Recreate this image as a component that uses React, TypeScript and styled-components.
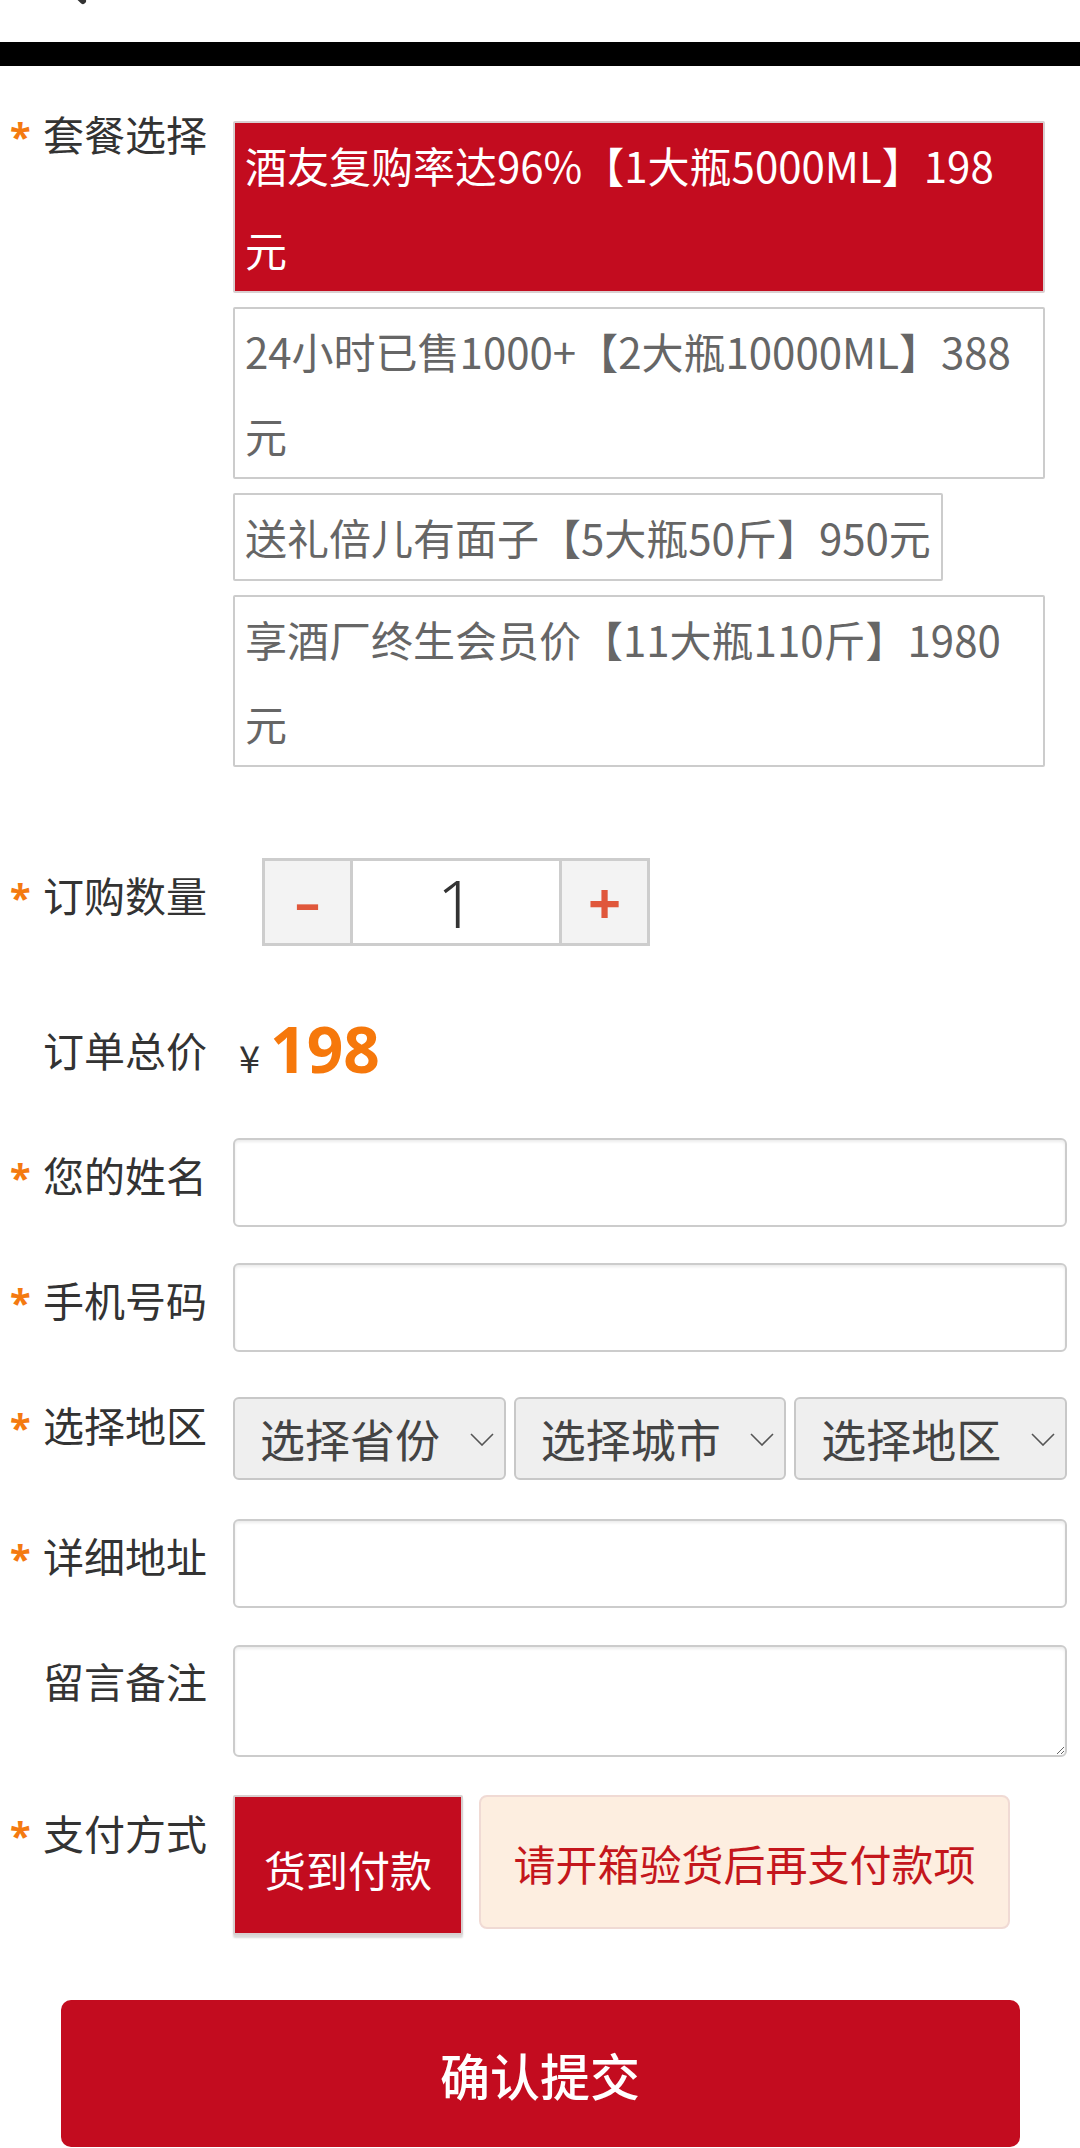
import React, { useState } from 'react';
import styled, { createGlobalStyle } from 'styled-components';

const GlobalStyle = createGlobalStyle`
  html, body {
    margin: 0;
    padding: 0;
    background: #fff;
  }
  body {
    font-family: "Noto Sans CJK SC", "Noto Sans", sans-serif;
    color: #333;
  }
  * {
    box-sizing: border-box;
  }
`;

const RED = '#c30c1f';
const ORANGE = '#f47a10';

const Page = styled.div`
    width: 1080px;
    background: #fff;
`;

const Header = styled.header`
    height: 42px;
    overflow: hidden;
`;

const Divider = styled.div`
    height: 24px;
    background: #000;
`;

const Form = styled.form`
    display: flex;
    flex-direction: column;
    padding-top: 55px;
`;

const Fields = styled.div`
    display: flex;
    flex-direction: column;
    padding-right: 13px;
`;

const Row = styled.div<{ $mt?: number }>`
    display: flex;
    align-items: flex-start;
    margin-top: ${(p) => p.$mt ?? 0}px;
`;

const Label = styled.label<{ $lh: number }>`
    flex: 0 0 233px;
    display: block;
    padding-left: 10px;
    font-size: 41px;
    line-height: ${(p) => p.$lh}px;
    color: #333;
    white-space: nowrap;
`;

const Star = styled.span`
    display: inline-block;
    width: 33px;
    color: ${ORANGE};
    font-family: "Noto Sans", sans-serif;
    font-size: 38px;
    font-weight: 700;
`;

const Content = styled.div`
    flex: 1;
    min-width: 0;
`;

const OptionList = styled.div`
    width: 812px;
    display: flex;
    flex-direction: column;
    align-items: flex-start;
    gap: 14px;
`;

const Option = styled.div<{ $active?: boolean }>`
    max-width: 100%;
    padding: 0 10px;
    border: 2px solid ${(p) => (p.$active ? '#d9cfd0' : '#cccccc')};
    border-radius: 2px;
    background: ${(p) => (p.$active ? RED : '#fff')};
    color: ${(p) => (p.$active ? '#fff' : '#666')};
    font-size: 42px;
    line-height: 84px;
    cursor: pointer;
`;

const Stepper = styled.div`
    display: flex;
    width: 388px;
    height: 88px;
    margin-left: 29px;
    border: 3px solid #cdcdcd;
`;

const StepButton = styled.button<{ $size: number }>`
    flex: 0 0 85px;
    border: none;
    padding: 0;
    background: #f3f3f3;
    color: #e0573b;
    font-family: "Noto Sans", sans-serif;
    font-size: ${(p) => p.$size}px;
    font-weight: 700;
    line-height: 1;
    cursor: pointer;
`;

const CountInput = styled.input`
    flex: 1;
    min-width: 0;
    border: none;
    border-left: 3px solid #cdcdcd;
    border-right: 3px solid #cdcdcd;
    text-align: center;
    font-family: "Noto Sans", sans-serif;
    font-size: 66px;
    font-weight: 300;
    color: #333;
    outline: none;
    padding: 0;
`;

const Price = styled.div`
    height: 72px;
    line-height: 72px;
    padding-left: 6px;
    font-family: "Noto Sans", sans-serif;
    font-size: 64px;
    white-space: nowrap;
`;

const Yen = styled.span`
    font-family: "Noto Sans CJK SC", sans-serif;
    font-size: 38px;
    color: #333;
    margin-right: 10px;
`;

const Amount = styled.span`
    font-weight: 700;
    color: #f6780b;
`;

const TextInput = styled.input`
    display: block;
    width: 100%;
    height: 89px;
    padding: 0 16px;
    border: 2px solid #cccccc;
    border-radius: 6px;
    box-shadow: inset 0 2px 3px rgba(0, 0, 0, 0.08);
    background: #fff;
    font-family: inherit;
    font-size: 40px;
    outline: none;
`;

const TextArea = styled.textarea`
    display: block;
    width: 100%;
    height: 112px;
    padding: 10px 16px;
    border: 2px solid #cccccc;
    border-radius: 6px;
    box-shadow: inset 0 2px 3px rgba(0, 0, 0, 0.08);
    background: #fff;
    font-family: inherit;
    font-size: 40px;
    outline: none;
`;

const SelectGroup = styled.div`
    display: grid;
    grid-template-columns: repeat(3, 1fr);
    gap: 8px;
`;

const SelectWrap = styled.div`
    position: relative;
    height: 83px;
`;

const Select = styled.select`
    appearance: none;
    width: 100%;
    height: 100%;
    padding: 0 40px 0 25px;
    border: 2px solid #c8c8c8;
    border-radius: 6px;
    background: #efefef;
    color: #444;
    font-family: inherit;
    font-size: 45px;
    outline: none;
`;

const Chevron = styled.svg`
    position: absolute;
    right: 12px;
    top: 36px;
    pointer-events: none;
`;

const PayRow = styled.div`
    display: flex;
    align-items: flex-start;
    gap: 16px;
`;

const PayOption = styled.button`
    width: 230px;
    height: 140px;
    padding: 6px 0 0;
    border: 2px solid #d8d0d0;
    border-radius: 2px;
    background: ${RED};
    box-shadow: 0 3px 2px rgba(0, 0, 0, 0.15);
    color: #fff;
    font-family: inherit;
    font-size: 42px;
`;

const PayNote = styled.div`
    width: 531px;
    height: 134px;
    display: flex;
    align-items: center;
    justify-content: center;
    border: 2px solid #f0dad4;
    border-radius: 8px;
    background: #fdeee0;
    color: #c4161c;
    font-size: 42px;
`;

const Submit = styled.button`
    display: block;
    width: 959px;
    height: 147px;
    margin: 65px auto 0;
    border: none;
    border-radius: 10px;
    background: ${RED};
    color: #fff;
    font-family: inherit;
    font-size: 50px;
    font-weight: 500;
    cursor: pointer;
`;

const packages = [
    { text: '酒友复购率达96%【1大瓶5000ML】198元', price: 198 },
    { text: '24小时已售1000+【2大瓶10000ML】388元', price: 388 },
    { text: '送礼倍儿有面子【5大瓶50斤】950元', price: 950 },
    { text: '享酒厂终生会员价【11大瓶110斤】1980元', price: 1980 },
];

const SelectBox = ({ placeholder }: { placeholder: string }) => (
    <SelectWrap>
        <Select defaultValue="">
            <option value="">{placeholder}</option>
        </Select>
        <Chevron width="24" height="13" viewBox="0 0 24 13">
            <polyline points="1,1 12,12 23,1" fill="none" stroke="#555" strokeWidth="1.6" />
        </Chevron>
    </SelectWrap>
);

export default function App() {
    const [selected, setSelected] = useState(0);
    const [count, setCount] = useState(1);
    const total = packages[selected].price * count;

    return (
        <Page>
            <GlobalStyle />
            <Header>
                <svg width="120" height="42" viewBox="0 0 120 42">
                    <path d="M50 -30 L83 1" stroke="#333" strokeWidth="6" strokeLinecap="round" fill="none" />
                </svg>
            </Header>
            <Divider />
            <Form onSubmit={(e) => e.preventDefault()}>
                <Fields>
                    <Row>
                        <Label $lh={24}>
                            <Star>*</Star>套餐选择
                        </Label>
                        <Content>
                            <OptionList>
                                {packages.map((p, i) => (
                                    <Option key={p.text} $active={i === selected} onClick={() => setSelected(i)}>
                                        {p.text}
                                    </Option>
                                ))}
                            </OptionList>
                        </Content>
                    </Row>

                    <Row $mt={91}>
                        <Label $lh={72}>
                            <Star>*</Star>订购数量
                        </Label>
                        <Content>
                            <Stepper>
                                <StepButton
                                    type="button"
                                    $size={50}
                                    onClick={() => setCount((c) => Math.max(1, c - 1))}
                                >
                                    –
                                </StepButton>
                                <CountInput value={count} readOnly />
                                <StepButton type="button" $size={58} onClick={() => setCount((c) => c + 1)}>
                                    +
                                </StepButton>
                            </Stepper>
                        </Content>
                    </Row>

                    <Row $mt={67}>
                        <Label $lh={72}>
                            <Star />订单总价
                        </Label>
                        <Content>
                            <Price>
                                <Yen>¥</Yen>
                                <Amount>{total}</Amount>
                            </Price>
                        </Content>
                    </Row>

                    <Row $mt={53}>
                        <Label $lh={72}>
                            <Star>*</Star>您的姓名
                        </Label>
                        <Content>
                            <TextInput type="text" />
                        </Content>
                    </Row>

                    <Row $mt={36}>
                        <Label $lh={72}>
                            <Star>*</Star>手机号码
                        </Label>
                        <Content>
                            <TextInput type="tel" />
                        </Content>
                    </Row>

                    <Row $mt={45}>
                        <Label $lh={55}>
                            <Star>*</Star>选择地区
                        </Label>
                        <Content>
                            <SelectGroup>
                                <SelectBox placeholder="选择省份" />
                                <SelectBox placeholder="选择城市" />
                                <SelectBox placeholder="选择地区" />
                            </SelectGroup>
                        </Content>
                    </Row>

                    <Row $mt={39}>
                        <Label $lh={72}>
                            <Star>*</Star>详细地址
                        </Label>
                        <Content>
                            <TextInput type="text" />
                        </Content>
                    </Row>

                    <Row $mt={37}>
                        <Label $lh={70}>
                            <Star />留言备注
                        </Label>
                        <Content>
                            <TextArea />
                        </Content>
                    </Row>

                    <Row $mt={38}>
                        <Label $lh={74}>
                            <Star>*</Star>支付方式
                        </Label>
                        <Content>
                            <PayRow>
                                <PayOption type="button">货到付款</PayOption>
                                <PayNote>请开箱验货后再支付款项</PayNote>
                            </PayRow>
                        </Content>
                    </Row>
                </Fields>
                <Submit type="submit">确认提交</Submit>
            </Form>
        </Page>
    );
}
